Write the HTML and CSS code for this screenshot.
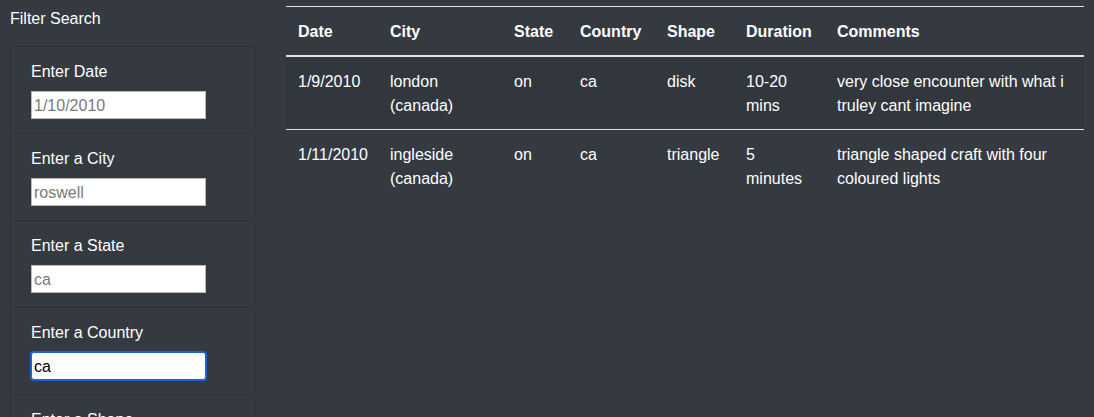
FILE: index.html
```html
<!DOCTYPE html>
<html>
<head>
<meta charset="utf-8">
<link rel="stylesheet" href="styles.css">
</head>
<body>
<div class="page">
  <aside class="sidebar">
    <div class="sidebar-title">Filter Search</div>
    <ul class="filters">
      <li class="filter">
        <label class="filter-label">Enter Date</label>
        <input class="filter-input" type="text" placeholder="1/10/2010">
      </li>
      <li class="filter">
        <label class="filter-label">Enter a City</label>
        <input class="filter-input" type="text" placeholder="roswell">
      </li>
      <li class="filter">
        <label class="filter-label">Enter a State</label>
        <input class="filter-input" type="text" placeholder="ca">
      </li>
      <li class="filter">
        <label class="filter-label">Enter a Country</label>
        <input class="filter-input focused" type="text" value="ca">
      </li>
      <li class="filter">
        <label class="filter-label">Enter a Shape</label>
        <input class="filter-input" type="text" placeholder="circle">
      </li>
    </ul>
  </aside>
  <main class="results">
    <table class="ufo-table">
      <thead>
        <tr>
          <th class="c-date">Date</th>
          <th class="c-city">City</th>
          <th class="c-state">State</th>
          <th class="c-country">Country</th>
          <th class="c-shape">Shape</th>
          <th class="c-duration">Duration</th>
          <th class="c-comments">Comments</th>
        </tr>
      </thead>
      <tbody>
        <tr>
          <td>1/9/2010</td>
          <td>london (canada)</td>
          <td>on</td>
          <td>ca</td>
          <td>disk</td>
          <td>10-20 mins</td>
          <td>very close encounter with what i truley cant imagine</td>
        </tr>
        <tr>
          <td>1/11/2010</td>
          <td>ingleside (canada)</td>
          <td>on</td>
          <td>ca</td>
          <td>triangle</td>
          <td>5 minutes</td>
          <td>triangle shaped craft with four coloured lights</td>
        </tr>
      </tbody>
    </table>
  </main>
</div>
</body>
</html>
```

FILE: styles.css
```css
html, body {
  margin: 0;
  padding: 0;
  background: #343a40;
  color: #fff;
  font-family: "Liberation Sans", Arial, Helvetica, sans-serif;
  font-size: 16px;
  line-height: 1.5;
  height: 100%;
  overflow: hidden;
}

.page {
  display: flex;
  align-items: flex-start;
  padding: 6px 10px 0 10px;
  gap: 31px;
}

.sidebar {
  width: 245px;
  flex: none;
}

.sidebar-title {
  height: 23px;
  padding-top: 1px;
  margin-bottom: 16px;
}

.filters {
  list-style: none;
  margin: 0;
  padding: 0;
  border: 1px solid rgba(0, 0, 0, 0.125);
  border-radius: 4px;
}

.filter {
  padding: 12px 20px 12px 20px;
  border-top: 1px solid rgba(0, 0, 0, 0.125);
  height: 62px;
}

.filter:first-child {
  border-top: none;
}

.filter-label {
  display: block;
  padding-top: 1px;
  margin-bottom: 7px;
  height: 24px;
  color: #fff;
}

.filter-input {
  display: block;
  box-sizing: border-box;
  width: 175px;
  height: 28px;
  margin: 1px 0 0 0;
  padding: 2px 2px 0 2px;
  border: 1px solid #b9b9b9;
  border-radius: 0;
  background: #fff;
  color: #000;
  font-family: "Liberation Sans", Arial, Helvetica, sans-serif;
  font-size: 16px;
  outline: none;
}

.filter-input::placeholder {
  color: #7a7a7a;
}

.filter-input.focused {
  border: 1px solid #1d62d4;
  border-radius: 3px;
  box-shadow: 0 0 0 1px #1d62d4;
}

.results {
  flex: 1;
  min-width: 0;
}

.ufo-table {
  width: 798px;
  border-collapse: collapse;
  table-layout: fixed;
  color: #fff;
}

.ufo-table th,
.ufo-table td {
  padding: 13px 12px 11px 12px;
  text-align: left;
  vertical-align: top;
  border-top: 1px solid #dee2e6;
}

.ufo-table th {
  font-weight: bold;
  border-bottom: 2px solid #dee2e6;
}

.ufo-table tbody tr:nth-child(odd) {
  background: rgba(0, 0, 0, 0.05);
}

.c-date { width: 68px; }
.c-city { width: 100px; }
.c-state { width: 42px; }
.c-country { width: 63px; }
.c-shape { width: 55px; }
.c-duration { width: 67px; }
.c-comments { width: auto; }
```
